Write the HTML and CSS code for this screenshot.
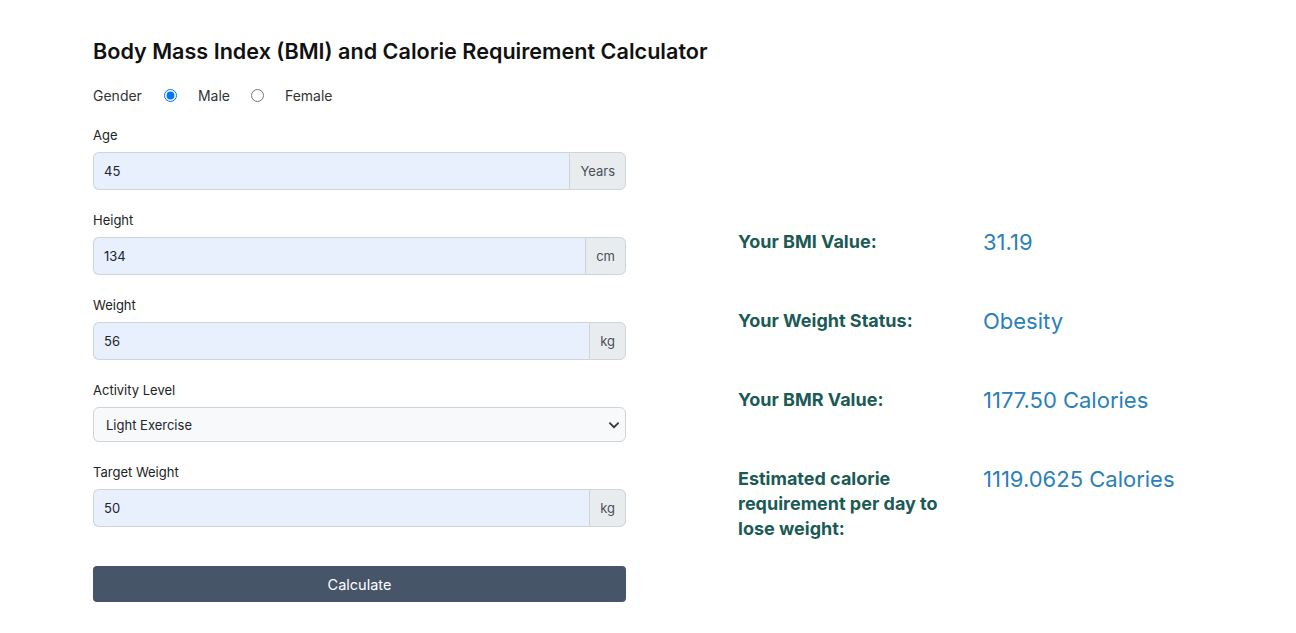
FILE: index.html
```html
<!DOCTYPE html>
<html lang="en">
<head>
<meta charset="utf-8">
<title>BMI and Calorie Calculator</title>
<link rel="stylesheet" href="styles.css">
</head>
<body>
<main class="page">
  <h1 class="title">Body Mass Index (BMI) and Calorie Requirement Calculator</h1>
  <div class="layout">
    <form class="form">
      <div class="gender">
        <span class="gender-label">Gender</span>
        <label class="radio"><input type="radio" name="g" checked><span>Male</span></label>
        <label class="radio"><input type="radio" name="g"><span>Female</span></label>
      </div>
      <div class="field">
        <label class="field-label">Age</label>
        <div class="group">
          <input class="control" type="text" value="45">
          <span class="addon">Years</span>
        </div>
      </div>
      <div class="field">
        <label class="field-label">Height</label>
        <div class="group">
          <input class="control" type="text" value="134">
          <span class="addon">cm</span>
        </div>
      </div>
      <div class="field">
        <label class="field-label">Weight</label>
        <div class="group">
          <input class="control" type="text" value="56">
          <span class="addon">kg</span>
        </div>
      </div>
      <div class="field">
        <label class="field-label">Activity Level</label>
        <div class="select-wrap">
          <select class="select">
            <option>Light Exercise</option>
          </select>
          <svg class="chevron" viewBox="0 0 16 16" width="12" height="12"><path d="M2.5 5.5 8 11l5.5-5.5" fill="none" stroke="#343a40" stroke-width="2.4" stroke-linecap="round" stroke-linejoin="round"/></svg>
        </div>
      </div>
      <div class="field">
        <label class="field-label">Target Weight</label>
        <div class="group">
          <input class="control" type="text" value="50">
          <span class="addon">kg</span>
        </div>
      </div>
      <button type="button" class="btn">Calculate</button>
    </form>
    <section class="results">
      <div class="result">
        <div class="r-label">Your BMI Value:</div>
        <div class="r-value">31.19</div>
      </div>
      <div class="result">
        <div class="r-label">Your Weight Status:</div>
        <div class="r-value">Obesity</div>
      </div>
      <div class="result">
        <div class="r-label">Your BMR Value:</div>
        <div class="r-value">1177.50 Calories</div>
      </div>
      <div class="result">
        <div class="r-label">Estimated calorie requirement per day to lose weight:</div>
        <div class="r-value">1119.0625 Calories</div>
      </div>
    </section>
  </div>
</main>
</body>
</html>
```
FILE: styles.css
```css
* { box-sizing: border-box; }
html, body { margin: 0; background: #fff; }
body {
  font-family: Inter, "Noto Sans", "Liberation Sans", sans-serif;
  color: #212529;
}
.page {
  padding: 37px 0 0 93px;
}
.title {
  margin: 0;
  font-size: 21.6px;
  line-height: 28px;
  font-weight: 600;
  color: #111;
}
.layout {
  display: flex;
  gap: 112px;
  margin-top: 20px;
}
.form {
  width: 533px;
  display: flex;
  flex-direction: column;
}
.gender {
  display: flex;
  align-items: center;
  height: 20px;
  font-size: 14px;
  color: #333;
}
.gender-label { margin-right: 22px; }
.radio {
  display: flex;
  align-items: center;
  margin-right: 21px;
}
.radio input {
  margin: 0 21px 0 0;
  width: 13px;
  height: 13px;
}
.field {
  margin-top: 21px;
  display: flex;
  flex-direction: column;
}
.field-label {
  font-size: 13px;
  line-height: 18px;
  color: #222;
  margin-bottom: 8px;
}
.group {
  display: flex;
  height: 38px;
}
.control {
  flex: 1;
  min-width: 0;
  border: 1px solid #ced4da;
  border-right: none;
  border-radius: 6px 0 0 6px;
  background: #e8f0fe;
  font: inherit;
  font-size: 13px;
  color: #212529;
  padding: 0 10px;
  outline: none;
}
.addon {
  display: flex;
  align-items: center;
  padding: 0 10px;
  background: #e9ecef;
  border: 1px solid #ced4da;
  border-radius: 0 6px 6px 0;
  font-size: 13px;
  color: #495057;
}
.select-wrap {
  position: relative;
  height: 35px;
}
.select {
  width: 100%;
  height: 35px;
  appearance: none;
  -webkit-appearance: none;
  border: 1px solid #ced4da;
  border-radius: 6px;
  background: #f8f9fa;
  font: inherit;
  font-size: 13px;
  color: #212529;
  padding: 0 12px;
  outline: none;
}
.chevron {
  position: absolute;
  right: 6px;
  top: 12px;
  pointer-events: none;
}
.btn {
  margin-top: 39px;
  height: 36px;
  border: none;
  border-radius: 4px;
  background: #475569;
  color: #fff;
  font: inherit;
  font-size: 14.5px;
  cursor: pointer;
}
.results {
  padding-top: 143px;
  display: flex;
  flex-direction: column;
  gap: 51px;
}
.result {
  display: flex;
  align-items: flex-start;
}
.r-label {
  width: 245px;
  padding-right: 20px;
  font-size: 18px;
  line-height: 25px;
  font-weight: 700;
  color: #1b5a55;
  padding-top: 1px;
}
.r-value {
  font-size: 22px;
  line-height: 28px;
  color: #2a80b9;
}
```
